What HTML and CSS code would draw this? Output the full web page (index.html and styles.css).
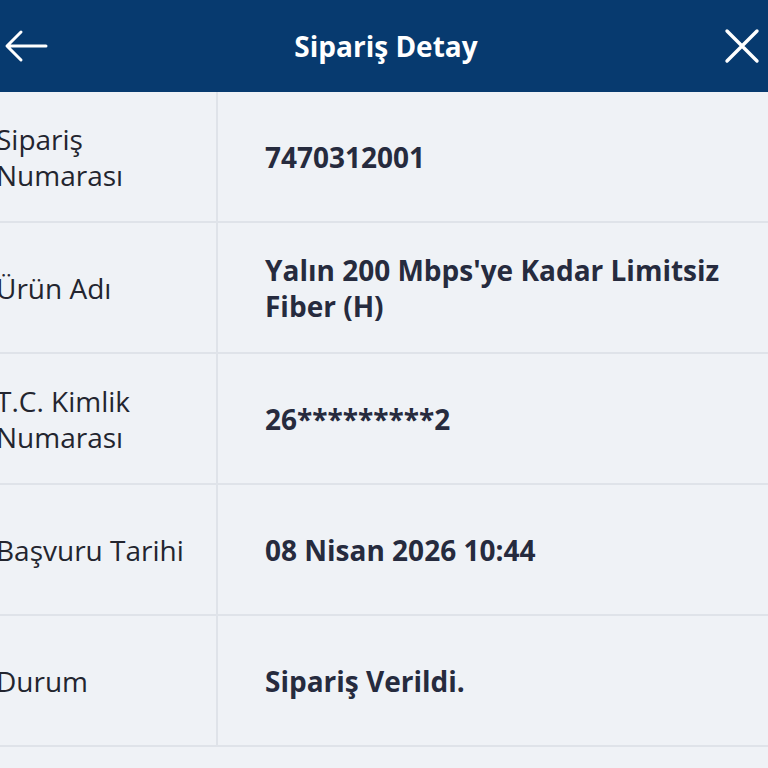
FILE: index.html
```html
<!DOCTYPE html>
<html lang="tr">
<head>
  <meta charset="UTF-8" />
  <meta name="viewport" content="width=device-width, initial-scale=1.0"/>
  <title>Sipariş Detay</title>
  <link rel="stylesheet" href="styles.css">
</head>
<body>
  <header class="topbar">
    <button class="icon-btn" aria-label="Geri">
      <svg width="44" height="34" viewBox="0 0 44 34" fill="none" stroke="#fff" stroke-width="3" stroke-linecap="round" stroke-linejoin="round">
        <path d="M42 17H4M17 3L3 17l14 14"/>
      </svg>
    </button>
    <h1>Sipariş Detay</h1>
    <button class="icon-btn" aria-label="Kapat">
      <svg width="36" height="36" viewBox="0 0 36 36" fill="none" stroke="#fff" stroke-width="3.4" stroke-linecap="round">
        <path d="M3 3l30 30M33 3L3 33"/>
      </svg>
    </button>
  </header>

  <div class="details">
    <div class="row">
      <div class="label">Sipariş<br/>Numarası</div>
      <div class="value">7470312001</div>
    </div>
    <div class="row">
      <div class="label">Ürün Adı</div>
      <div class="value">Yalın 200 Mbps'ye Kadar Limitsiz<br/>Fiber (H)</div>
    </div>
    <div class="row">
      <div class="label">T.C. Kimlik<br/>Numarası</div>
      <div class="value">26*********2</div>
    </div>
    <div class="row">
      <div class="label">Başvuru Tarihi</div>
      <div class="value">08 Nisan 2026 10:44</div>
    </div>
    <div class="row">
      <div class="label">Durum</div>
      <div class="value">Sipariş Verildi.</div>
    </div>
  </div>
</body>
</html>
```

FILE: styles.css
```css
body {
  margin: 0;
  background: #eff2f6;
  font-family: "Open Sans", Lato, sans-serif;
  overflow: hidden;
}
.topbar {
  height: 92px;
  background: #073a6f;
  display: flex;
  align-items: center;
  justify-content: space-between;
  padding: 0 8px 0 4px;
}
.topbar h1 {
  margin: 0;
  color: #fff;
  font-size: 28px;
  font-weight: 700;
}
.icon-btn {
  background: none;
  border: none;
  padding: 0;
  display: flex;
  cursor: pointer;
}
.details {
  margin-left: -24px;
}
.row {
  display: grid;
  grid-template-columns: 242px 1fr;
  height: 131px;
  border-bottom: 2px solid #dfe3e9;
  box-sizing: border-box;
}
.label {
  display: flex;
  align-items: center;
  padding-left: 20px;
  border-right: 2px solid #dfe3e9;
  color: #23252f;
  font-size: 28px;
  line-height: 36px;
}
.value {
  display: flex;
  align-items: center;
  padding-left: 47px;
  padding-right: 10px;
  color: #262b3e;
  font-size: 28px;
  font-weight: 700;
  line-height: 36px;
}
```
